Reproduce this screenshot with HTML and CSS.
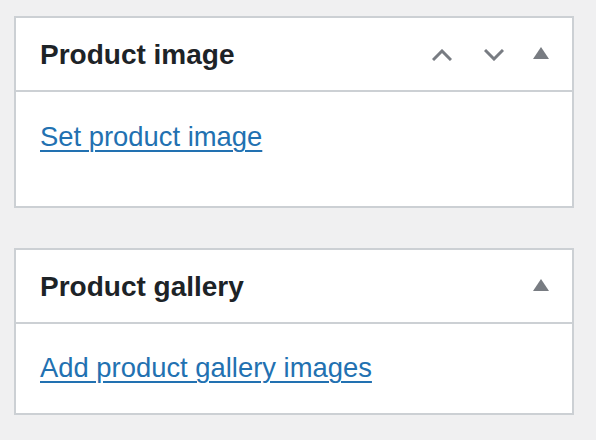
FILE: index.html
```html
<!DOCTYPE html>
<html lang="en">
<head>
<meta charset="utf-8">
<title>Product boxes</title>
<link rel="stylesheet" href="styles.css">
</head>
<body>
<div class="column">
  <section class="postbox">
    <div class="postbox-header">
      <h2 class="postbox-title">Product image</h2>
      <div class="handle-actions">
        <button class="handle-btn handle-up" aria-label="Move up">
          <svg width="20" height="12" viewBox="0 0 20 12"><polyline points="1,11 10,2 19,11" fill="none" stroke="#787c82" stroke-width="3"/></svg>
        </button>
        <button class="handle-btn handle-down" aria-label="Move down">
          <svg width="20" height="12" viewBox="0 0 20 12"><polyline points="1,1 10,10 19,1" fill="none" stroke="#787c82" stroke-width="3"/></svg>
        </button>
        <button class="handle-btn handle-toggle" aria-label="Toggle panel">
          <svg width="16" height="12" viewBox="0 0 16 12"><polygon points="0,12 8,0 16,12" fill="#787c82"/></svg>
        </button>
      </div>
    </div>
    <div class="inside inside-tall">
      <a class="inside-link" href="#">Set product image</a>
    </div>
  </section>

  <section class="postbox">
    <div class="postbox-header">
      <h2 class="postbox-title">Product gallery</h2>
      <div class="handle-actions">
        <button class="handle-btn handle-toggle" aria-label="Toggle panel">
          <svg width="16" height="12" viewBox="0 0 16 12"><polygon points="0,12 8,0 16,12" fill="#787c82"/></svg>
        </button>
      </div>
    </div>
    <div class="inside">
      <a class="inside-link" href="#">Add product gallery images</a>
    </div>
  </section>
</div>
</body>
</html>
```
FILE: styles.css
```css
html, body {
  margin: 0;
  padding: 0;
  background: #f0f0f1;
}

body {
  font-family: "Liberation Sans", Arial, sans-serif;
  color: #1d2327;
}

.column {
  display: flex;
  flex-direction: column;
  gap: 40px;
  width: 560px;
  padding: 16px 0 0 14px;
}

.postbox {
  background: #ffffff;
  border: 2px solid #ccd0d4;
}

.postbox-header {
  display: flex;
  align-items: flex-start;
  height: 72px;
  border-bottom: 2px solid #ccd0d4;
}

.postbox-title {
  flex: 1;
  margin: 0;
  padding: 21px 24px 0;
  font-size: 28px;
  line-height: 32px;
  font-weight: 700;
  color: #1d2327;
}

.handle-actions {
  display: flex;
  align-items: flex-start;
  padding-right: 23px;
}

.handle-btn {
  display: flex;
  padding: 0;
  margin: 0;
  border: 0;
  background: none;
  cursor: pointer;
}

.handle-up,
.handle-down {
  margin-top: 31px;
}

.handle-down {
  margin-left: 32px;
}

.handle-toggle {
  margin-top: 29px;
  margin-left: 29px;
}

.inside {
  padding: 24px 24px 25px;
}

.inside-tall {
  padding-top: 25px;
  padding-bottom: 49px;
}

.inside-link {
  display: block;
  font-size: 27.4px;
  line-height: 40px;
  color: #2271b1;
  text-decoration: underline;
  text-decoration-thickness: 2px;
  text-underline-offset: 4px;
}
```
